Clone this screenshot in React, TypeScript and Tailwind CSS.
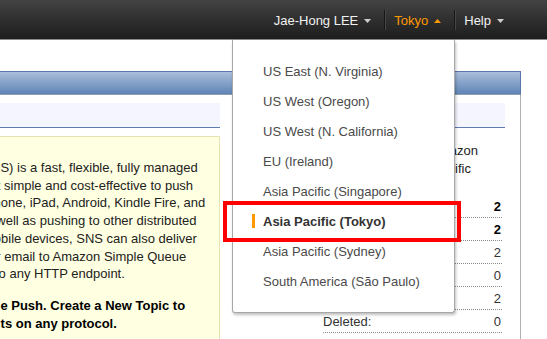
import React from "react";

function Caret({ up = false, color }: { up?: boolean; color: string }) {
  return (
    <svg width="7" height="4" viewBox="0 0 7 4" className="ml-[6px]">
      {up ? (
        <polygon points="0,4 7,4 3.5,0" fill={color} />
      ) : (
        <polygon points="0,0 7,0 3.5,4" fill={color} />
      )}
    </svg>
  );
}

function Sep() {
  return (
    <div className="flex h-[20px] ml-[13px] mr-[8px]">
      <div className="w-px bg-[#161616]" />
      <div className="w-px bg-[#474747]" />
    </div>
  );
}

const regions = [
  "US East (N. Virginia)",
  "US West (Oregon)",
  "US West (N. California)",
  "EU (Ireland)",
  "Asia Pacific (Singapore)",
  "Asia Pacific (Tokyo)",
  "Asia Pacific (Sydney)",
  "South America (São Paulo)",
];

const rows = [
  { label: "Topics:", value: "2", bold: true },
  { label: "Applications:", value: "2", bold: true },
  { label: "Subscriptions:", value: "2", bold: false },
  { label: "Pending:", value: "0", bold: false },
  { label: "Confirmed:", value: "2", bold: false },
  { label: "Deleted:", value: "0", bold: false },
];

export default function App() {
  return (
    <div
      className="relative w-[547px] h-[339px] overflow-hidden bg-white text-[13px] text-[#333]"
      style={{ fontFamily: '"Liberation Sans", Arial, sans-serif' }}
    >
      {/* Top nav */}
      <div className="h-[40px] bg-gradient-to-b from-[#434343] to-[#1d1d1d] border-b border-[#8a8a8a] flex items-center justify-end pr-[43px]">
        <div className="flex items-center text-[#f2f2f2] mt-[3px]">
          <span>Jae-Hong LEE</span>
          <Caret color="#cfcfcf" />
        </div>
        <Sep />
        <div className="flex items-center text-[#ff9900] mt-[3px]">
          <span>Tokyo</span>
          <Caret up color="#ff9900" />
        </div>
        <Sep />
        <div className="flex items-center text-[#f2f2f2] mt-[3px]">
          <span>Help</span>
          <Caret color="#cfcfcf" />
        </div>
      </div>

      {/* Main panel */}
      <div className="w-[521px] mt-[31px]">
        <div className="h-[24px] border-t border-r border-[#5878a9] bg-gradient-to-b from-[#abbedb] to-[#5e84b5] border-b border-b-[#8f9bb0]" />
        <div className="flex border-r border-[#b0b0b0] h-[260px] pt-[8px] pr-[15px]">
          {/* Left column */}
          <div className="w-[220px] flex flex-col">
            <div className="h-[25px] bg-[#f4f5fe] border-b border-[#5b7db1]" />
            <div className="mt-[8px] flex-1 bg-[#ffffe1] border-t border-r border-[#e6e2b4] overflow-hidden pt-[22px] text-[#222] leading-[17.7px]">
              <div className="whitespace-nowrap ml-[-22px]">(SNS) is a fast, flexible, fully managed</div>
              <div className="whitespace-nowrap ml-[-48px]">makes it simple and cost-effective to push</div>
              <div className="whitespace-nowrap ml-[-18px]">iPhone, iPad, Android, Kindle Fire, and</div>
              <div className="whitespace-nowrap ml-[-21px]">as well as pushing to other distributed</div>
              <div className="whitespace-nowrap ml-[-17px]">mobile devices, SNS can also deliver</div>
              <div className="whitespace-nowrap ml-[-11px]">or email to Amazon Simple Queue</div>
              <div className="whitespace-nowrap ml-[-5px]">to any HTTP endpoint.</div>
              <div className="mt-[14px] font-bold text-black">
                <div className="whitespace-nowrap ml-[-35px]">Simple Push. Create a New Topic to</div>
                <div className="whitespace-nowrap ml-[-50px]">endpoints on any protocol.</div>
              </div>
            </div>
          </div>

          <div className="flex-1" />

          {/* Right column */}
          <div className="w-[184px] flex flex-col">
            <div className="h-[25px] bg-[#f4f5fe] border-b border-[#5b7db1]" />
            <div className="mt-[14px] leading-[17.7px] text-[#222]">
              <div className="whitespace-nowrap text-right pr-[27px]">region is Amazon</div>
              <div className="whitespace-nowrap text-right pr-[34px]">Asia Pacific</div>
            </div>
            <div className="mt-[18px] ml-[2px] mr-[3px]">
              {rows.map((r) => (
                <div
                  key={r.label}
                  className="h-[23px] flex items-end justify-between pb-[3px] pr-[1px] border-b border-dotted border-[#8a8a8a] leading-[15px]"
                >
                  <span className="text-[#333]">{r.label}</span>
                  <span className={r.bold ? "font-bold text-black" : "text-[#333]"}>{r.value}</span>
                </div>
              ))}
            </div>
          </div>
        </div>
      </div>

      {/* Region dropdown */}
      <div className="absolute left-[232px] top-[40px] w-[223px] bg-white border border-t-0 border-[#a8a8a8] rounded-b-[3px] shadow-[1px_2px_3px_rgba(0,0,0,0.25)] pt-[17px] pb-[15px]">
        {regions.map((r) => {
          const active = r === "Asia Pacific (Tokyo)";
          return (
            <div
              key={r}
              className={
                "relative h-[30px] flex items-center pl-[30px] " +
                (active ? "font-bold text-[#333]" : "text-[#4a4a4a]")
              }
            >
              {active && (
                <div className="absolute left-[19px] top-[7px] w-[3px] h-[14px] bg-[#ff9900]" />
              )}
              <span>{r}</span>
            </div>
          );
        })}
      </div>

      {/* Red highlight box */}
      <div className="absolute left-[223px] top-[201px] w-[238px] h-[41px] border-[4px] border-[#ff0000]" />
    </div>
  );
}
